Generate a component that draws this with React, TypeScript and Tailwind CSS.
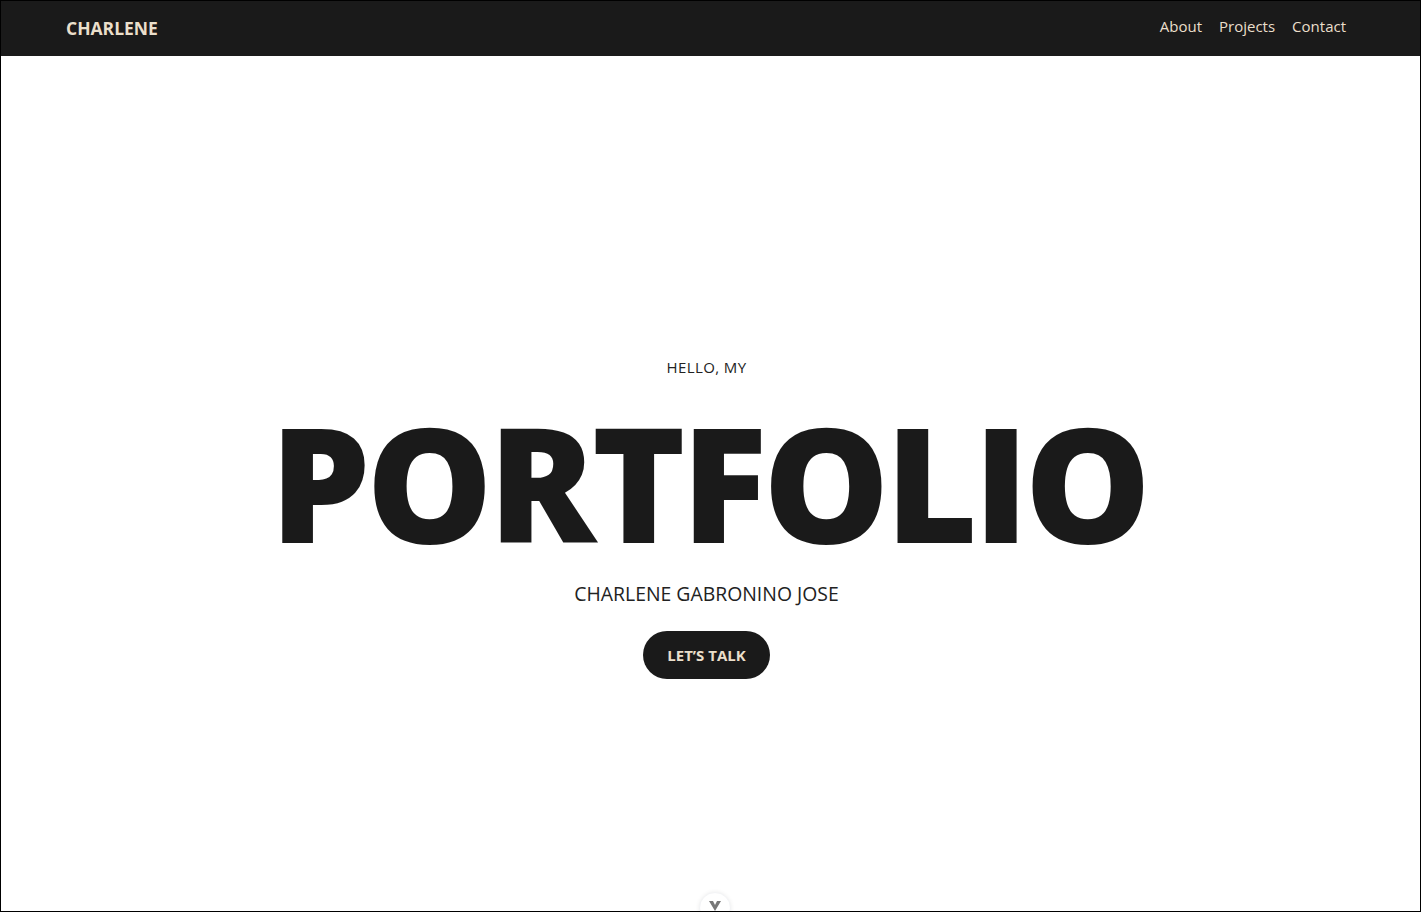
export default function App() {
  return (
    <div className="h-[912px] overflow-hidden border border-black bg-white font-['Open_Sans',sans-serif]">
      {/* Navbar */}
      <header className="flex h-[55px] items-center justify-between bg-[#1a1a1a] pl-[65px] pr-[74px]">
        <a href="#" className="pb-[1px] text-[17.5px] font-bold tracking-[0px] text-[#eadfcb]">
          CHARLENE
        </a>
        <nav className="flex items-center gap-[17px] pb-[5px] text-[15px] text-[#eadfcb]">
          <a href="#about">About</a>
          <a href="#projects">Projects</a>
          <a href="#contact">Contact</a>
        </nav>
      </header>

      {/* Hero */}
      <section className="relative flex h-[855px] flex-col items-center pr-[8px] pt-[300px] text-center">
        <p className="text-[15px] tracking-[0.4px] text-[#222]">HELLO, MY</p>
        <h1 className="mt-[43px] pl-[4px] text-[159px] font-extrabold leading-[0.75] tracking-[-4.3px] text-[#1a1a1a]">
          PORTFOLIO
        </h1>
        <p className="mt-[38px] text-[19.4px] text-[#222]">CHARLENE GABRONINO JOSE</p>
        <a
          href="#contact"
          className="mt-[23px] flex h-[48px] w-[127px] items-center justify-center rounded-full bg-[#1a1a1a] text-[15px] font-bold text-[#eadfcb]"
        >
          LET’S TALK
        </a>

        {/* Scroll indicator */}
        <div className="absolute bottom-[-13px] left-[698px] flex h-[32px] w-[32px] items-start justify-center rounded-full border border-gray-100 bg-white pt-[8px] shadow-[0_0_4px_rgba(0,0,0,0.08)]">
          <svg width="12" height="10" viewBox="0 0 12 10" className="text-[#777]">
            <polygon points="0,0 4,0 6,4 8,0 12,0 6,10" fill="currentColor" />
          </svg>
        </div>
      </section>
    </div>
  );
}
